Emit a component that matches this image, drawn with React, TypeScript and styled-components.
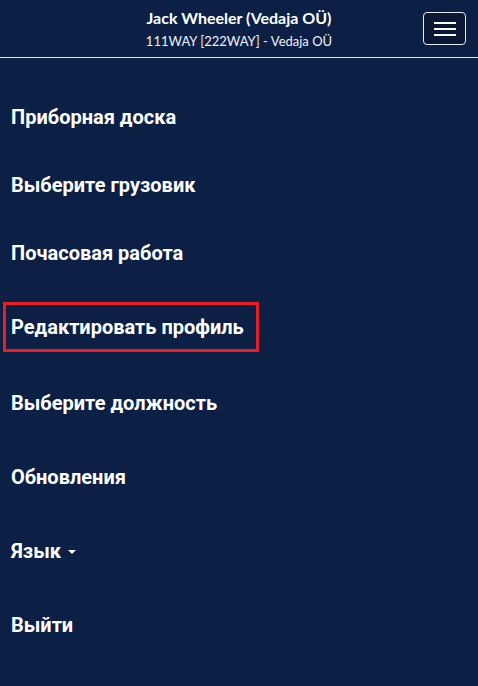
import styled, { createGlobalStyle } from 'styled-components';

const GlobalStyle = createGlobalStyle`
  html, body {
    margin: 0;
    padding: 0;
    background: #0c1f45;
  }
  body {
    font-family: Roboto, "Liberation Sans", sans-serif;
    color: #ffffff;
  }
`;

const Page = styled.div`
  min-height: 686px;
  background: #0c1f45;
`;

const Navbar = styled.header`
  display: grid;
  grid-template-columns: 1fr auto 1fr;
  align-items: center;
  height: 57px;
  border-bottom: 1.5px solid #dfe6f5;
`;

const Driver = styled.div`
  grid-column: 2;
  display: flex;
  flex-direction: column;
  align-items: center;
  font-family: Lato, "Noto Sans", sans-serif;
  line-height: 1;
`;

const DriverName = styled.div`
  font-size: 16px;
  font-weight: 700;
  margin-top: 0;
`;

const Vehicle = styled.div`
  font-size: 13px;
  margin-top: 9px;
  color: #eef1f8;
`;

const Toggler = styled.button`
  grid-column: 3;
  justify-self: end;
  margin-right: 12px;
  width: 43px;
  height: 33px;
  border: 1px solid #e8ecf5;
  border-radius: 4px;
  background: #0b1733;
  display: flex;
  flex-direction: column;
  justify-content: center;
  align-items: center;
  gap: 4px;
  padding: 0;
`;

const Bar = styled.span`
  display: block;
  width: 22px;
  height: 2px;
  background: #ffffff;
`;

const Menu = styled.nav`
  display: flex;
  flex-direction: column;
  padding-top: 25px;
`;

const Item = styled.a<{ $h: number }>`
  display: flex;
  align-items: center;
  height: ${p => p.$h}px;
  padding-left: 11px;
  font-size: 20px;
  font-weight: 700;
  color: #ffffff;
  text-decoration: none;
`;

const Marked = styled.span`
  display: flex;
  align-items: center;
  height: 44px;
  margin-left: -8px;
  padding: 0 12px 0 5px;
  border: 3px solid #ec1c24;
`;

const Caret = styled.span`
  display: inline-block;
  margin-left: 7px;
  margin-top: 2px;
  border-left: 4px solid transparent;
  border-right: 4px solid transparent;
  border-top: 4px solid #ffffff;
`;

export default function App() {
  return (
    <Page>
      <GlobalStyle />
      <Navbar>
        <Driver>
          <DriverName>Jack Wheeler (Vedaja OÜ)</DriverName>
          <Vehicle>111WAY [222WAY] - Vedaja OÜ</Vehicle>
        </Driver>
        <Toggler aria-label="Menu">
          <Bar />
          <Bar />
          <Bar />
        </Toggler>
      </Navbar>
      <Menu>
        <Item $h={68}>Приборная доска</Item>
        <Item $h={68}>Выберите грузовик</Item>
        <Item $h={68}>Почасовая работа</Item>
        <Item $h={79}>
          <Marked>Редактировать профиль</Marked>
        </Item>
        <Item $h={74}>Выберите должность</Item>
        <Item $h={74}>Обновления</Item>
        <Item $h={74}>
          Язык
          <Caret />
        </Item>
        <Item $h={74}>Выйти</Item>
      </Menu>
    </Page>
  );
}
